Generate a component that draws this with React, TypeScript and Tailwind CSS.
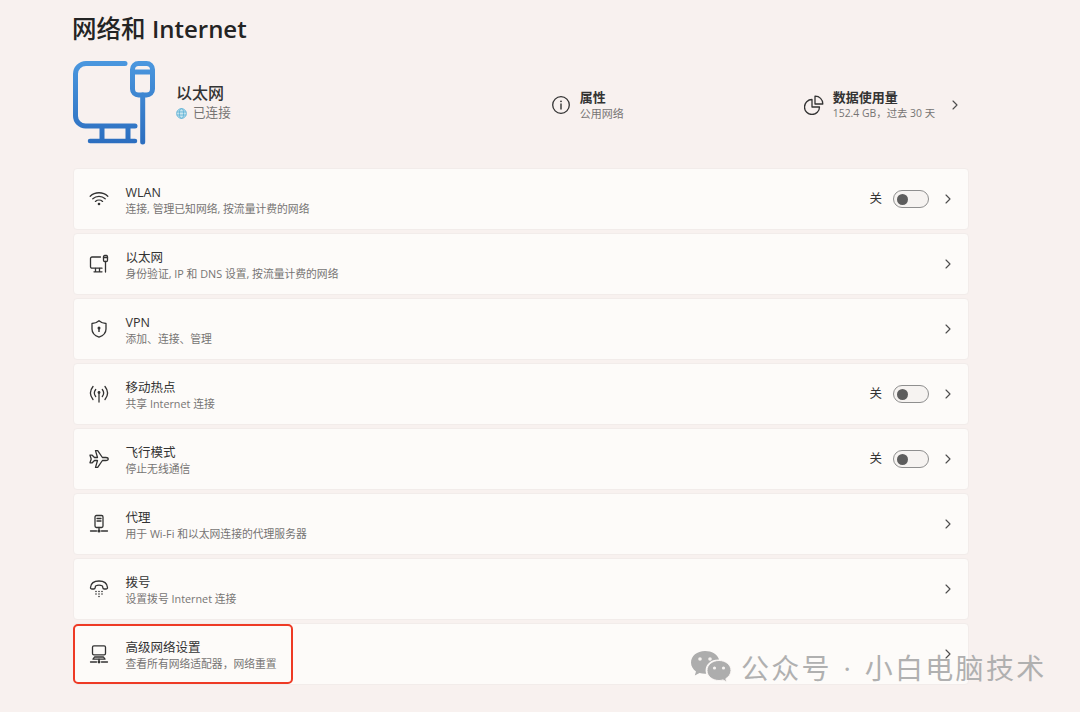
import { ChevronRight } from 'lucide-react';
import type { ReactNode } from 'react';

const ink = '#333333';

function WifiIcon() {
  return (
    <svg width="20" height="20" viewBox="0 0 20 20" fill="none" stroke={ink} strokeWidth="1.3" strokeLinecap="round">
      <path d="M1.2 7.2C6 2.6 14 2.6 18.8 7.2" />
      <path d="M3.8 9.8C7.3 6.6 12.7 6.6 16.2 9.8" />
      <path d="M6.4 12.4C8.4 10.7 11.6 10.7 13.6 12.4" />
      <circle cx="10" cy="15" r="1.3" fill={ink} stroke="none" />
    </svg>
  );
}

function EthernetIcon() {
  return (
    <svg width="20" height="20" viewBox="0 0 20 20" fill="none" stroke={ink} strokeWidth="1.3" strokeLinecap="round" strokeLinejoin="round">
      <path d="M11.5 3H3a1.5 1.5 0 0 0-1.5 1.5v8.2A1.5 1.5 0 0 0 3 14.2h10" />
      <path d="M5 17.8h8M6.5 14.5v3M10.5 14.5v3" />
      <rect x="14.5" y="1.5" width="4" height="6" rx="1.2" />
      <path d="M14.5 3.5h4M16.5 7.5V18" />
    </svg>
  );
}

function ShieldIcon() {
  return (
    <svg width="20" height="20" viewBox="0 0 20 20" fill="none" stroke={ink} strokeWidth="1.3" strokeLinejoin="round">
      <path d="M10 1.8C12 3.6 14.5 4.5 17 4.5V10c0 4-3 6.8-7 8.2C6 16.8 3 14 3 10V4.5c2.5 0 5-.9 7-2.7Z" />
      <circle cx="10" cy="9" r="1.5" fill={ink} stroke="none" />
      <path d="M10 9v4" strokeWidth="1.4" />
    </svg>
  );
}

function HotspotIcon() {
  return (
    <svg width="20" height="20" viewBox="0 0 20 20" fill="none" stroke={ink} strokeWidth="1.3" strokeLinecap="round">
      <path d="M4 2.5C.8 6.5.8 11.5 4 15.5M16 2.5c3.2 4 3.2 9 0 13" />
      <path d="M6.7 5.5c-1.8 2.3-1.8 4.7 0 7M13.3 5.5c1.8 2.3 1.8 4.7 0 7" />
      <circle cx="10" cy="8.5" r="1.4" fill={ink} stroke="none" />
      <path d="M10 9v9" />
    </svg>
  );
}

function PlaneIcon() {
  return (
    <svg width="20" height="20" viewBox="0 0 20 20" fill="none" stroke={ink} strokeWidth="1.3" strokeLinejoin="round">
      <path d="M1 6.2h2.2l2.3 2.3h3L6.5 1.6h2.2l4.7 6.900h3.400c1.200 0 2.400.7 2.400 1.500s-1.200 1.500-2.400 1.500h-3.400l-4.700 6.900H6.500l2-6.900h-3l-2.300 2.300H1l1.200-3.800L1 6.200Z" />
    </svg>
  );
}

function ProxyIcon() {
  return (
    <svg width="20" height="20" viewBox="0 0 20 20" fill="none" stroke={ink} strokeWidth="1.3" strokeLinecap="round" strokeLinejoin="round">
      <rect x="6" y="1.5" width="8" height="12" rx="1.4" />
      <path d="M8 4.5h4M8 7h4" />
      <path d="M10 13.5v2M1.5 17h6M12.5 17h6" />
      <circle cx="10" cy="17" r="1.6" fill={ink} stroke="none" />
    </svg>
  );
}

function DialIcon() {
  return (
    <svg width="20" height="20" viewBox="0 0 20 20" fill="none" stroke={ink} strokeWidth="1.3" strokeLinejoin="round">
      <path d="M1.5 8.5C2 3.5 6 2 10 2s8 1.5 8.5 6.5c.1 1-.6 1.5-1.5 1.5h-1.8c-.8 0-1.300-.5-1.400-1.300L13.500 7c-2.200-1-4.800-1-7 0l-.3 1.700C6.100 9.500 5.600 10 4.800 10H3c-.9 0-1.600-.5-1.500-1.500Z" />
      <g fill={ink} stroke="none">
        <circle cx="7" cy="12.5" r=".8" />
        <circle cx="10" cy="12.5" r=".8" />
        <circle cx="13" cy="12.5" r=".8" />
        <circle cx="7" cy="15" r=".8" />
        <circle cx="10" cy="15" r=".8" />
        <circle cx="13" cy="15" r=".8" />
        <circle cx="10" cy="17.5" r=".8" />
      </g>
    </svg>
  );
}

function AdvancedIcon() {
  return (
    <svg width="20" height="20" viewBox="0 0 20 20" fill="none" stroke={ink} strokeWidth="1.3" strokeLinecap="round" strokeLinejoin="round">
      <rect x="3.5" y="1.8" width="13" height="9" rx="1.4" />
      <path d="M5.5 13h9l1.5 2.200H4L5.500 13Z" />
      <path d="M10 15.200v1.800M1.500 18h6M12.500 18h6" />
      <circle cx="10" cy="18" r="1.4" fill={ink} stroke="none" />
    </svg>
  );
}

function HeroIcon() {
  return (
    <svg width="84" height="86" viewBox="0 0 84 86">
      <defs>
        <linearGradient id="hero" gradientUnits="userSpaceOnUse" x1="0" y1="0" x2="0" y2="86">
          <stop offset="0" stopColor="#4b98df" />
          <stop offset="1" stopColor="#2b6dbe" />
        </linearGradient>
      </defs>
      <g fill="none" stroke="url(#hero)" strokeWidth="5" strokeLinecap="round" strokeLinejoin="round">
        <path d="M53 3.5H14A10.5 10.5 0 0 0 3.5 14v42A10 10 0 0 0 13.5 66H63" />
        <path d="M30 66v15M56 66v15" strokeLinecap="butt" />
        <path d="M18 81h45" strokeWidth="4.5" />
        <rect x="60.5" y="3.5" width="20" height="31.5" rx="6" />
        <path d="M61 12h19" />
        <path d="M70.7 35v47" />
      </g>
    </svg>
  );
}

function InfoIcon() {
  return (
    <svg width="20" height="20" viewBox="0 0 20 20" fill="none" stroke="#333" strokeWidth="1.3" strokeLinecap="round">
      <circle cx="10" cy="10" r="8.3" />
      <path d="M10 9v5" strokeWidth="1.4" />
      <circle cx="10" cy="6.3" r=".9" fill="#333" stroke="none" />
    </svg>
  );
}

function PieIcon() {
  return (
    <svg width="20" height="20" viewBox="0 0 20 20" fill="none" stroke="#333" strokeWidth="1.3" strokeLinejoin="round">
      <path d="M8 4.5A7.5 7.5 0 1 0 15.5 12H8V4.5Z" />
      <path d="M11 1.2a7.5 7.5 0 0 1 7.8 7.8H11V1.2Z" />
    </svg>
  );
}

function GlobeIcon() {
  return (
    <svg width="11" height="11" viewBox="0 0 12 12" fill="none" stroke="#62b4d8" strokeWidth="1">
      <circle cx="6" cy="6" r="5.3" fill="#c9e6ef" />
      <ellipse cx="6" cy="6" rx="2.3" ry="5.3" />
      <path d="M1 4.3h10M1 7.7h10" />
    </svg>
  );
}

function WeChatIcon() {
  return (
    <svg width="42" height="36" viewBox="0 0 42 36" fill="#adadad">
      <path d="M15 1C7 1 1 6 1 12.5c0 3.7 2 6.8 5 9l-1.2 4 4.7-2.5c1.8.5 3.600.8 5.500.8h1.200c-.4-1.200-.6-2.400-.6-3.600 0-6 5.500-10.800 12.500-10.800h1C27.500 4.500 21.800 1 15 1Z" />
      <path d="M29 10.5c-6.7 0-12 4.400-12 10s5.300 10 12 10c1.400 0 2.800-.2 4-.6l3.800 2.100-1-3.300c3-1.900 5.200-4.800 5.200-8.200 0-5.600-5.300-10-12-10Z" stroke="#fbf7f5" strokeWidth="1" />
      <circle cx="10" cy="9" r="1.8" fill="#f5f2f0" />
      <circle cx="20" cy="9" r="1.8" fill="#f5f2f0" />
      <circle cx="24.5" cy="18" r="1.6" fill="#f5f2f0" />
      <circle cx="33.5" cy="18" r="1.6" fill="#f5f2f0" />
    </svg>
  );
}

function Toggle() {
  return (
    <div className="flex items-center">
      <span className="text-[12.5px] text-[#333] mr-[11px]">关</span>
      <div className="w-[36px] h-[18px] rounded-full border border-[#8f8f8f] bg-[#f6f3f1] flex items-center pl-[3px]">
        <div className="w-[11px] h-[11px] rounded-full bg-[#5d5d5d]" />
      </div>
    </div>
  );
}

type Item = {
  icon: ReactNode;
  title: string;
  sub: string;
  toggle?: boolean;
  marked?: boolean;
};

const items: Item[] = [
  { icon: <WifiIcon />, title: 'WLAN', sub: '连接, 管理已知网络, 按流量计费的网络', toggle: true },
  { icon: <EthernetIcon />, title: '以太网', sub: '身份验证, IP 和 DNS 设置, 按流量计费的网络' },
  { icon: <ShieldIcon />, title: 'VPN', sub: '添加、连接、管理' },
  { icon: <HotspotIcon />, title: '移动热点', sub: '共享 Internet 连接', toggle: true },
  { icon: <PlaneIcon />, title: '飞行模式', sub: '停止无线通信', toggle: true },
  { icon: <ProxyIcon />, title: '代理', sub: '用于 Wi-Fi 和以太网连接的代理服务器' },
  { icon: <DialIcon />, title: '拨号', sub: '设置拨号 Internet 连接' },
  { icon: <AdvancedIcon />, title: '高级网络设置', sub: '查看所有网络适配器，网络重置', marked: true },
];

function Row({ item }: { item: Item }) {
  return (
    <div className="relative h-[62px] flex items-center bg-[#fdfbf9] border border-[#f2ecea] rounded-[4px] pl-[15px] pr-[12px]">
      <div className="w-[20px] h-[20px] shrink-0">{item.icon}</div>
      <div className="ml-[16.5px] pt-[2px] flex-1 min-w-0">
        <div className="text-[12.5px] leading-[17px] text-[#333]">{item.title}</div>
        <div className="text-[10.8px] leading-[15px] text-[#767473]">{item.sub}</div>
      </div>
      {item.toggle && <Toggle />}
      <ChevronRight className="ml-[11px] w-[16px] h-[16px] text-[#4d4d4d]" strokeWidth={1.7} />
      {item.marked && (
        <div className="absolute left-[-1px] top-[0px] w-[220px] h-[60px] border-2 border-[#ee3a25] rounded-[5px]" />
      )}
    </div>
  );
}

export default function App() {
  return (
    <div
      className="relative w-[1080px] h-[712px] overflow-hidden bg-[#f8f1ef] pl-[73px] pr-[111px]"
      style={{ fontFamily: '"Open Sans", "Noto Sans CJK SC", sans-serif' }}
    >
      <h1 className="pt-[11px] h-[60px] text-[24.5px] leading-[36px] text-[#242424] ml-[-1px] font-medium">
        网络和 <span className="text-[24px] font-semibold">Internet</span>
      </h1>

      <div className="flex items-center h-[86px]">
        <div className="ml-[-1px]"><HeroIcon /></div>
        <div className="ml-[20px] mt-[-2px]">
          <div className="text-[16px] leading-[22px] font-medium text-[#333]">以太网</div>
          <div className="flex items-center text-[12.6px] leading-[18px] text-[#767473]">
            <GlobeIcon />
            <span className="ml-[6px]">已连接</span>
          </div>
        </div>
        <div className="ml-[320px] mt-[4px] flex items-center">
          <InfoIcon />
          <div className="ml-[9px]">
            <div className="text-[13px] leading-[17px] font-semibold text-[#333]">属性</div>
            <div className="text-[11px] leading-[15px] text-[#767473]">公用网络</div>
          </div>
        </div>
        <div className="ml-[180px] mt-[4px] flex items-center shrink-0">
          <PieIcon />
          <div className="ml-[9px] whitespace-nowrap">
            <div className="text-[13px] leading-[17px] font-semibold text-[#333]">数据使用量</div>
            <div className="text-[10.4px] leading-[15px] text-[#767473]">152.4 GB，过去 30 天</div>
          </div>
          <ChevronRight className="ml-[12px] w-[16px] h-[16px] text-[#4d4d4d]" strokeWidth={1.7} />
        </div>
      </div>

      <div className="mt-[22px] flex flex-col gap-[3px]">
        {items.map((item) => (
          <Row key={item.title} item={item} />
        ))}
      </div>

      <div className="absolute left-[690px] top-[648px] flex items-center">
        <WeChatIcon />
        <span className="ml-[9px] text-[28px] leading-[40px] text-[#b0b0b0] tracking-[2.3px] [word-spacing:2px] whitespace-nowrap">公众号 · 小白电脑技术</span>
      </div>
    </div>
  );
}
